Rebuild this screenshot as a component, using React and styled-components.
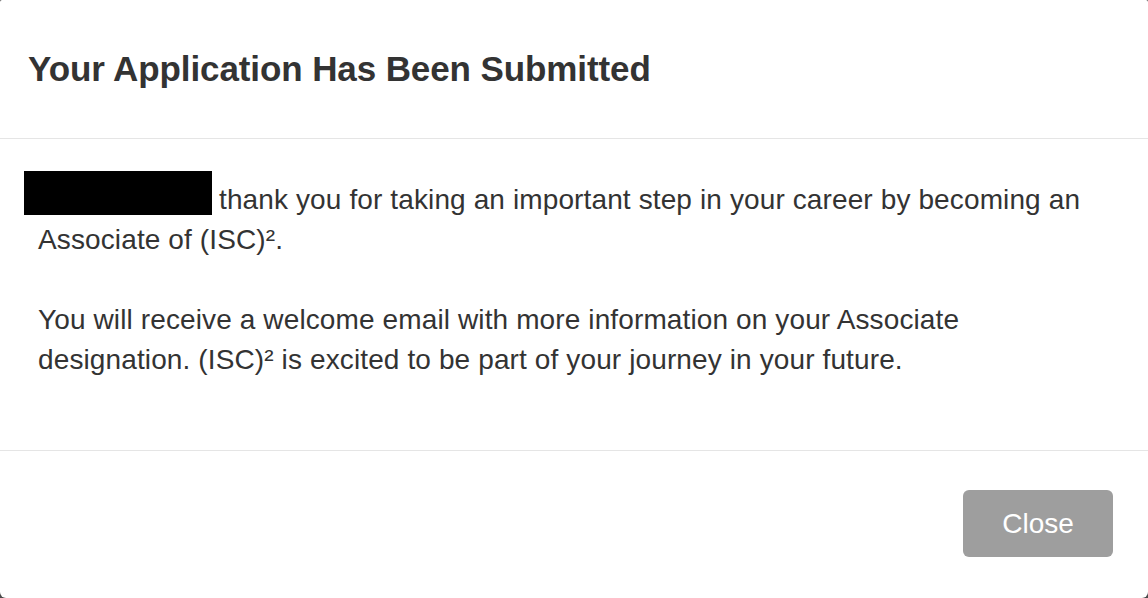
import styled, { createGlobalStyle } from "styled-components";

const GlobalStyle = createGlobalStyle`
  html, body {
    margin: 0;
    padding: 0;
    background: #4a4a4a;
  }
  body {
    font-family: "Liberation Sans", Arial, Helvetica, sans-serif;
    color: #333;
  }
`;

const Modal = styled.div`
  width: 1148px;
  height: 598px;
  background: #fff;
  border-radius: 2px 2px 6px 6px;
  display: flex;
  flex-direction: column;
  overflow: hidden;
`;

const Header = styled.div`
  height: 138px;
  padding: 0 28px;
  display: flex;
  align-items: center;
  border-bottom: 1px solid #e5e5e5;
  box-sizing: content-box;
`;

const Title = styled.h4`
  margin: 0;
  font-size: 35px;
  font-weight: 700;
  color: #333;
  letter-spacing: -0.1px;
`;

const Body = styled.div`
  padding: 41px 38px 30px;
  border-bottom: 1px solid #e5e5e5;
`;

const Para = styled.p`
  margin: 0 0 40px;
  font-size: 28px;
  line-height: 40px;
  letter-spacing: 0.12px;
  color: #333;
`;

const Redacted = styled.span`
  display: inline-block;
  width: 188px;
  height: 44px;
  background: #000;
  margin: -9px 7px -3px -14px;
  vertical-align: top;
`;

const Footer = styled.div`
  flex: 1;
  display: flex;
  justify-content: flex-end;
  align-items: flex-start;
  padding: 39px 35px 0;
`;

const Button = styled.button`
  width: 150px;
  height: 67px;
  border: none;
  border-radius: 6px;
  background: #9e9e9e;
  color: #fff;
  font-family: "Liberation Sans", Arial, Helvetica, sans-serif;
  font-size: 28px;
  cursor: pointer;
`;

export default function App() {
  return (
    <>
      <GlobalStyle />
      <Modal>
        <Header>
          <Title>Your Application Has Been Submitted</Title>
        </Header>
        <Body>
          <Para>
            <Redacted />
            thank you for taking an important step in your career by becoming an
            Associate of (ISC)².
          </Para>
          <Para>
            You will receive a welcome email with more information on your
            Associate designation. (ISC)² is excited to be part of your journey
            in your future.
          </Para>
        </Body>
        <Footer>
          <Button>Close</Button>
        </Footer>
      </Modal>
    </>
  );
}
